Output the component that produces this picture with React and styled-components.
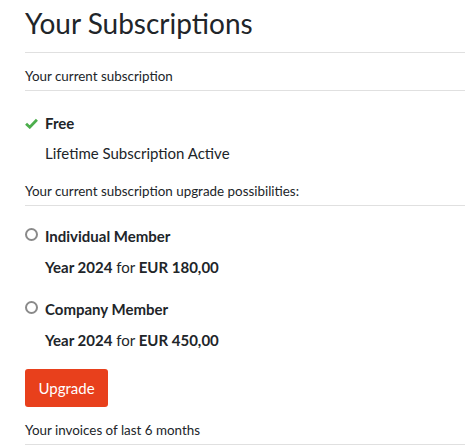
import React from 'react';
import styled, { createGlobalStyle } from 'styled-components';

const GlobalStyle = createGlobalStyle`
    body {
        margin: 0;
        background: #fff;
        font-family: Lato, "Liberation Sans", sans-serif;
        color: #212529;
    }
`;

const plans = [
    { name: 'Individual Member', year: 'Year 2024', price: 'EUR 180,00' },
    { name: 'Company Member', year: 'Year 2024', price: 'EUR 450,00' },
];

const App = () => {
    return (
        <>
            <GlobalStyle />
            <Page>
                <Title>Your Subscriptions</Title>
                <SectionLabel>Your current subscription</SectionLabel>
                <Current>
                    <PlanRow>
                        <CheckIcon viewBox="0 0 12 10">
                            <path d="M1 5.2 L4.4 8.4 L11 1.6" fill="none" stroke="#4cae4c" strokeWidth="2.6" />
                        </CheckIcon>
                        <PlanName>Free</PlanName>
                    </PlanRow>
                    <PlanNote>Lifetime Subscription Active</PlanNote>
                </Current>
                <SectionLabel>Your current subscription upgrade possibilities:</SectionLabel>
                <Options>
                    {plans.map((p) => (
                        <Option key={p.name}>
                            <PlanRow>
                                <Radio />
                                <PlanName>{p.name}</PlanName>
                            </PlanRow>
                            <Price>
                                <b>{p.year}</b> for <b>{p.price}</b>
                            </Price>
                        </Option>
                    ))}
                </Options>
                <UpgradeButton>Upgrade</UpgradeButton>
                <SectionLabel>Your invoices of last 6 months</SectionLabel>
            </Page>
        </>
    );
};

const Page = styled.div`
    padding: 6px 0 0 25px;
    display: flex;
    flex-direction: column;
`;

const Title = styled.h1`
    margin: 0;
    padding-bottom: 12px;
    font-size: 28px;
    font-weight: 400;
    line-height: 34px;
    border-bottom: 1px solid #e0e0e0;
`;

const SectionLabel = styled.div`
    font-size: 13.4px;
    line-height: 16px;
    padding: 15px 0 6px;
    border-bottom: 1px solid #e0e0e0;
`;

const Current = styled.div`
    padding: 23px 0 6px;
    display: flex;
    flex-direction: column;
    gap: 12px;
`;

const PlanRow = styled.div`
    display: flex;
    align-items: center;
    gap: 7px;
`;

const CheckIcon = styled.svg`
    width: 13px;
    height: 11px;
`;

const PlanName = styled.span`
    font-size: 15px;
    font-weight: 700;
    line-height: 18px;
`;

const PlanNote = styled.div`
    padding-left: 20px;
    font-size: 15px;
    line-height: 18px;
`;

const Options = styled.div`
    padding-top: 21px;
    display: flex;
    flex-direction: column;
    gap: 24px;
`;

const Option = styled.div`
    display: flex;
    flex-direction: column;
    gap: 13px;
`;

const Radio = styled.span`
    box-sizing: border-box;
    width: 13px;
    height: 13px;
    margin-top: -4px;
    border: 2px solid #8a8a8a;
    border-radius: 50%;
`;

const Price = styled.div`
    padding-left: 20px;
    font-size: 15px;
    line-height: 18px;
`;

const UpgradeButton = styled.button`
    align-self: flex-start;
    margin-top: 20px;
    width: 83px;
    height: 38px;
    border: none;
    border-radius: 3px;
    background: #e8401c;
    color: #fff;
    font-family: inherit;
    font-size: 15px;
    cursor: pointer;
`;

export default App;
